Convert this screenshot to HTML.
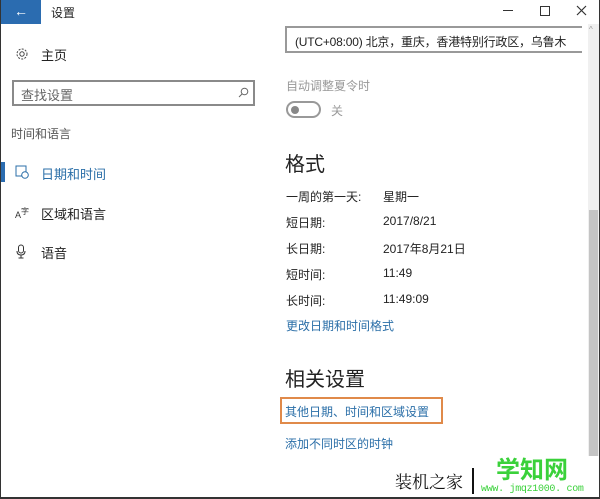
<!DOCTYPE html>
<html><head><meta charset="utf-8"><style>
*{margin:0;padding:0;box-sizing:border-box}
body{width:600px;height:499px;background:#fff;position:relative;overflow:hidden;font-family:"Liberation Sans","Noto Sans CJK SC",sans-serif;color:#222;border:1px solid #333;border-top:none}
.a{position:absolute;white-space:nowrap}
.lnk{color:#2b6fa8}
</style></head><body>
<div class="a" style="left:0;top:0;width:40px;height:24px;background:#2b6cb0;color:#fff;font-size:14px;text-align:center;line-height:22px">←</div>
<div class="a" style="left:50px;top:4px;font-size:12px">设置</div>
<div class="a" style="left:502px;top:10px;width:10px;height:1px;background:#333"></div>
<div class="a" style="left:539px;top:6px;width:10px;height:10px;border:1px solid #333"></div>
<svg class="a" style="left:575px;top:5px" width="11" height="11"><path d="M1 1L10 10M10 1L1 10" stroke="#333" stroke-width="1.2"/></svg>

<svg class="a" style="left:14px;top:47px" width="14" height="14" viewBox="0 0 14 14"><circle cx="7" cy="7" r="2.2" fill="none" stroke="#444"/><circle cx="7" cy="7" r="5" fill="none" stroke="#444" stroke-dasharray="2 1.3"/></svg>
<div class="a" style="left:40px;top:45px;font-size:13px">主页</div>
<div class="a" style="left:11px;top:80px;width:243px;height:26px;border:2px solid #8a8a8a"></div>
<div class="a" style="left:20px;top:85px;font-size:13px;color:#666">查找设置</div>
<svg class="a" style="left:237px;top:87px" width="11" height="11"><circle cx="6.5" cy="4.5" r="3.3" fill="none" stroke="#666"/><path d="M4 7L1 10" stroke="#666"/></svg>
<div class="a" style="left:10px;top:125px;font-size:12px;color:#555">时间和语言</div>
<div class="a" style="left:0;top:162px;width:4px;height:20px;background:#2b6cb0"></div>
<svg class="a" style="left:14px;top:165px" width="14" height="14"><rect x="1" y="1" width="10" height="10" fill="none" stroke="#2b6fa8"/><circle cx="10" cy="10" r="3.3" fill="#fff" stroke="#2b6fa8"/></svg>
<div class="a lnk" style="left:40px;top:164px;font-size:13px">日期和时间</div>
<div class="a" style="left:14px;top:206px;font-size:9px;color:#333">A<sup style="font-size:8px">字</sup></div>
<div class="a" style="left:40px;top:204px;font-size:13px">区域和语言</div>
<svg class="a" style="left:15px;top:244px" width="10" height="15"><rect x="2.5" y="1" width="5" height="8" rx="2.5" fill="none" stroke="#333"/><path d="M1 7Q1 11 5 11Q9 11 9 7M5 11V14M2.5 14H7.5" fill="none" stroke="#333"/></svg>
<div class="a" style="left:40px;top:243px;font-size:13px">语音</div>

<div class="a" style="left:284px;top:26px;width:297px;height:27px;border:2px solid #999;border-right:none"></div>
<div class="a" style="left:294px;top:33px;font-size:12px;letter-spacing:-0.2px;width:286px;overflow:hidden">(UTC+08:00) 北京，重庆，香港特别行政区，乌鲁木</div>
<div class="a" style="left:285px;top:77px;font-size:12px;color:#999">自动调整夏令时</div>
<div class="a" style="left:285px;top:101px;width:35px;height:17px;border:2px solid #999;border-radius:9px"></div>
<div class="a" style="left:290px;top:106px;width:8px;height:8px;background:#888;border-radius:50%"></div>
<div class="a" style="left:330px;top:102px;font-size:12px;color:#999">关</div>

<div class="a" style="left:284px;top:148px;font-size:20px">格式</div>
<div class="a" style="left:285px;top:188px;font-size:12px">一周的第一天:</div><div class="a" style="left:382px;top:188px;font-size:12px">星期一</div>
<div class="a" style="left:285px;top:214px;font-size:12px">短日期:</div><div class="a" style="left:382px;top:214px;font-size:12px">2017/8/21</div>
<div class="a" style="left:285px;top:240px;font-size:12px">长日期:</div><div class="a" style="left:382px;top:240px;font-size:12px">2017年8月21日</div>
<div class="a" style="left:285px;top:266px;font-size:12px">短时间:</div><div class="a" style="left:382px;top:266px;font-size:12px">11:49</div>
<div class="a" style="left:285px;top:292px;font-size:12px">长时间:</div><div class="a" style="left:382px;top:292px;font-size:12px">11:49:09</div>
<div class="a lnk" style="left:285px;top:317px;font-size:12px">更改日期和时间格式</div>

<div class="a" style="left:284px;top:363px;font-size:20px">相关设置</div>
<div class="a" style="left:279px;top:397px;width:163px;height:27px;border:2px solid #e08a4a"></div>
<div class="a lnk" style="left:284px;top:403px;font-size:12px">其他日期、时间和区域设置</div>
<div class="a lnk" style="left:284px;top:435px;font-size:12px">添加不同时区的时钟</div>

<div class="a" style="left:587px;top:24px;width:11px;height:432px;background:#f0f0f0"></div>
<div class="a" style="left:588px;top:210px;width:9px;height:246px;background:#c4c4c4"></div>
<div class="a" style="left:588px;top:25px;font-size:8px;color:#999">^</div>

<div class="a" style="left:394px;top:468px;font-size:17px;font-family:'Liberation Serif','Noto Serif CJK SC',serif;color:#111">装机之家</div>
<div class="a" style="left:471px;top:468px;width:2px;height:26px;background:#111"></div>
<div class="a" style="left:495px;top:450px;font-size:24px;font-weight:bold;color:#3ad13a">学知网</div>
<div class="a" style="left:480px;top:484px;font-size:10px;letter-spacing:-0.3px;font-family:'Liberation Mono',monospace;color:#3ad13a">www. jmqz1000. com</div>
<div class="a" style="left:0;top:497px;width:600px;height:2px;background:#333"></div>
</body></html>
